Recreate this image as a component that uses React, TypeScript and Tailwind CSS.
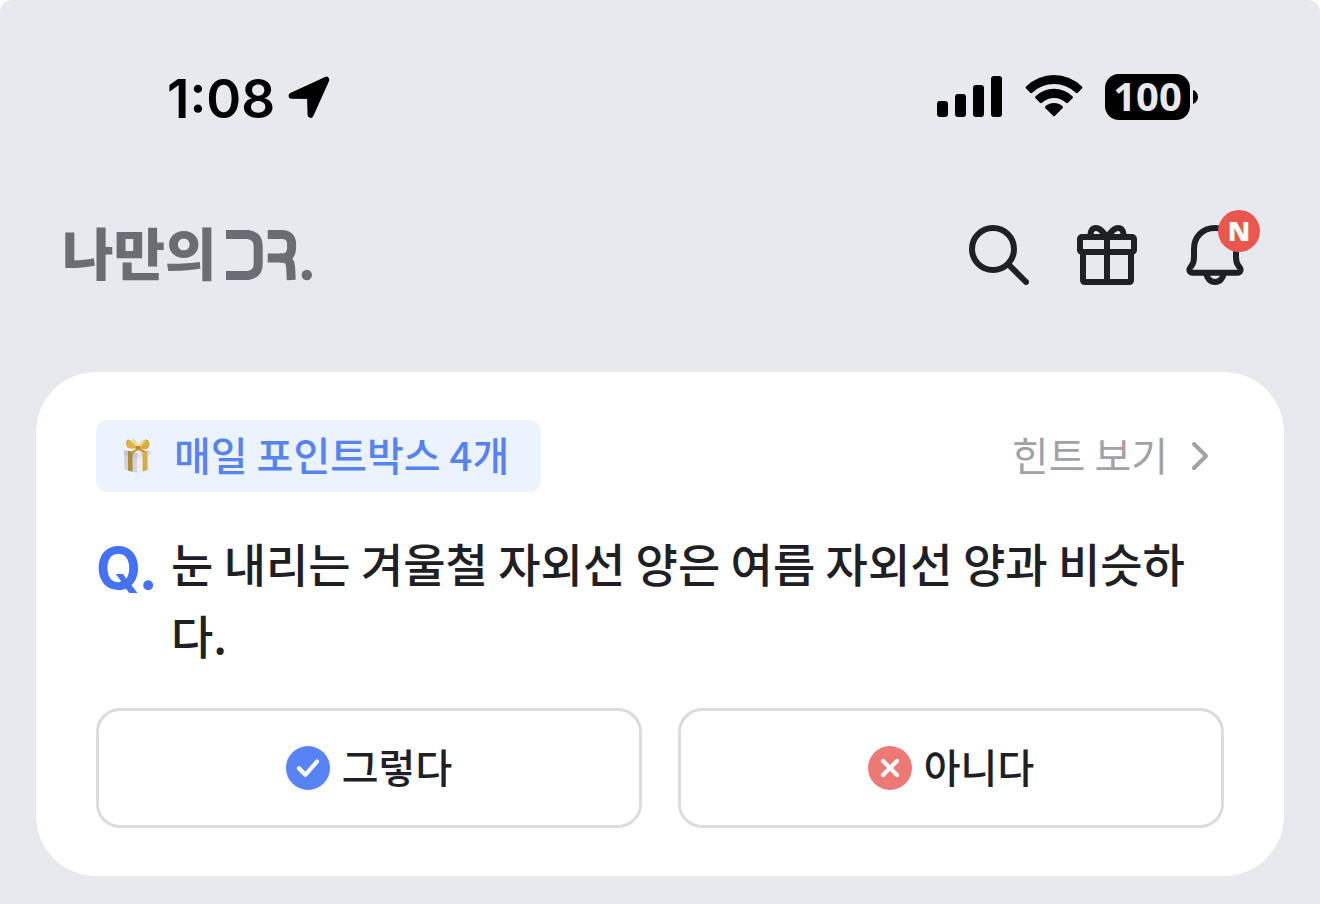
import React from "react";

function LocationIcon() {
  return (
    <svg viewBox="0 0 44 44" className="size-11" aria-hidden="true">
      <path
        d="M4.6 20.8 L39.3 4.7 L23.6 39.8 L23 21 Z"
        fill="#000"
        stroke="#000"
        strokeWidth="6"
        strokeLinejoin="round"
      />
    </svg>
  );
}

function SignalIcon() {
  return (
    <svg viewBox="0 0 66 44" className="h-11 w-[66px]" aria-hidden="true">
      <rect x="0" y="26" width="11" height="16" rx="3" />
      <rect x="18" y="19" width="11" height="23" rx="3" />
      <rect x="36" y="10" width="11" height="32" rx="3" />
      <rect x="54" y="1" width="11" height="41" rx="3" />
    </svg>
  );
}

function WifiIcon() {
  return (
    <svg viewBox="0 0 58 44" className="h-11 w-[58px]" aria-hidden="true">
      <path d="M1.1 13.6 Q0 12.5 1.1 11.4 A40 40 0 0 1 56.9 11.4 Q58 12.5 56.9 13.6 L52.8 17.8 Q51.8 18.7 50.8 17.8 A31.5 31.5 0 0 0 7.2 17.8 Q6.2 18.7 5.2 17.8 Z" />
      <path d="M10.5 23.2 Q9.5 22.2 10.5 21.2 A26.8 26.8 0 0 1 47.5 21.2 Q48.5 22.2 47.5 23.2 L43 27.7 Q42 28.6 41 27.7 A17.6 17.6 0 0 0 17 27.7 Q16 28.6 15 27.7 Z" />
      <path d="M20.5 33.2 Q19.5 32.1 20.6 31.1 A12.6 12.6 0 0 1 37.4 31.1 Q38.5 32.1 37.5 33.2 L30 40.8 Q29 41.8 28 40.8 Z" />
    </svg>
  );
}

function Battery() {
  return (
    <div className="flex items-center gap-[3px]" aria-label="배터리 100%">
      <div className="flex h-[46px] w-[85px] items-center justify-center rounded-[14px] bg-black pb-0.5">
        <span className="font-['Noto_Sans'] text-[40px] leading-none font-bold text-[#e8e9ee]">100</span>
      </div>
      <svg viewBox="0 0 5 14" className="h-3.5 w-[5px]" aria-hidden="true">
        <path d="M0 0 C3 1 5 4 5 7 C5 10 3 13 0 14 Z" />
      </svg>
    </div>
  );
}

function Logo() {
  return (
    <a href="#" className="flex items-center text-[#6b6d74]" aria-label="나만의DR.">
      <span className="pb-2 text-[56px] leading-[52px] font-black">나만의</span>
      <svg viewBox="225 225 90 60" className="ml-2 h-[60px] w-[90px]" fill="none" aria-hidden="true">
        <g stroke="currentColor" strokeWidth="9">
          <path d="M226 234.5 H248 Q258.2 236 258.2 246 V264 Q258.2 274 248 275.5 H226" />
          <path d="M267.7 234.5 H282 C288.5 234.5 291.6 238.5 291.6 244 V248 C291.6 254 288.5 258 282 258 H267.7" />
          <path d="M280 258 C288 258 290.3 261 290.6 267 L291.2 280" />
        </g>
        <circle cx="306.8" cy="275" r="5.2" fill="currentColor" />
      </svg>
    </a>
  );
}

function SearchIcon() {
  return (
    <svg viewBox="0 0 60 60" className="size-[60px]" fill="none" stroke="#1f2024" strokeWidth="6" strokeLinecap="round" aria-hidden="true">
      <circle cx="24" cy="24" r="21" />
      <path d="M39.5 39.5 L57 57" />
    </svg>
  );
}

function GiftIcon() {
  return (
    <svg viewBox="0 0 60 60" className="size-[60px]" fill="none" stroke="#1f2024" strokeWidth="6" strokeLinejoin="round" aria-hidden="true">
      <rect x="3" y="12" width="54" height="15" rx="2" />
      <path d="M6 27 V55 Q6 57 8 57 H52 Q54 57 54 55 V27" />
      <path d="M30 12 V57" />
      <path d="M14 12 C12.5 7 15 3 19 3 C23 3 25 6.5 30 11.5 C35 6.5 37 3 41 3 C45 3 47.5 7 46 12" />
    </svg>
  );
}

function BellIcon() {
  return (
    <svg viewBox="0 0 60 60" className="size-[60px]" fill="none" stroke="#1f2024" strokeWidth="6" strokeLinejoin="round" aria-hidden="true">
      <path d="M30 3 C17 3 9 12.5 9 24 V32 C9 36 8.4 38.3 6.8 40.4 L5.2 42.6 C3.6 45 4.6 47.7 7.6 47.7 H52.4 C55.4 47.7 56.4 45 54.8 42.6 L53.2 40.4 C51.6 38.3 51 36 51 32 V24 C51 12.5 43 3 30 3 Z" />
      <path d="M21 48 C22 53.6 25.5 57 30 57 C34.5 57 38 53.6 39 48" />
    </svg>
  );
}

function PresentBox() {
  return (
    <svg viewBox="0 0 32 36" className="h-9 w-8" aria-hidden="true">
      <path d="M4 12 L17 15 V35 L4.5 31.5 Z" fill="#d2d1e0" />
      <path d="M17 15 L30.5 12 L30 31.5 L17 35 Z" fill="#efedf3" />
      <path d="M4 11.5 L18 9 L31 11.5 L17 15 Z" fill="#f6f5fa" />
      <path d="M4 12 L17 15 V20 L4 17 Z" fill="#c4c3d4" />
      <path d="M17 15 L31 12 V17 L17 20 Z" fill="#e2dfe9" />
      <path d="M8 12.8 L12.5 14 V33.8 L8 32.5 Z" fill="#b08a35" />
      <path d="M22.5 13.8 L27.5 12.6 V32.3 L22.5 33.6 Z" fill="#d4af48" />
      <path d="M17 10 C14 5 9 0 7 2 C5 4 6 8 8 10 C11 11 14 11 17 10 Z" fill="#dcb64d" />
      <path d="M18 10 C19 4 25 0 28 2 C30 4 30 9 27 11 C24 12 21 11 18 10 Z" fill="#d6ab3f" />
      <path d="M16.5 8.5 C13 4 11 1 13 1 C15 1 17 4 18 8 Z M19 8 C20 4 23 2 26 3 L20 9 Z" fill="#f0d98a" />
      <path d="M15.5 8 H20 L20.5 12 L16 12.5 Z" fill="#b78a2b" />
      <path d="M16 11 L10 14 L13 15.5 L18 12 L23 14.5 L26 13 L20 10.5 Z" fill="#c79b35" />
    </svg>
  );
}

function ChevronRight() {
  return (
    <svg viewBox="0 0 48 48" className="size-12" fill="none" stroke="#a1a1a7" strokeWidth="4" strokeLinecap="round" strokeLinejoin="round" aria-hidden="true">
      <path d="M18 12 L30 24 L18 36" />
    </svg>
  );
}

function CheckBadge() {
  return (
    <svg viewBox="0 0 44 44" className="size-11" aria-hidden="true">
      <circle cx="22" cy="22" r="22" fill="#5783f6" />
      <path d="M13 22.2 L19.3 28.8 L31 15.6" fill="none" stroke="#fff" strokeWidth="4.2" strokeLinecap="round" strokeLinejoin="round" />
    </svg>
  );
}

function CrossBadge() {
  return (
    <svg viewBox="0 0 44 44" className="size-11" aria-hidden="true">
      <circle cx="22" cy="22" r="22" fill="#ec7975" />
      <path d="M15 15 L29 29 M29 15 L15 29" fill="none" stroke="#fff" strokeWidth="4.2" strokeLinecap="round" />
    </svg>
  );
}

function AnswerButton({ icon, label }: { icon: React.ReactNode; label: string }) {
  return (
    <button
      type="button"
      className="flex h-[120px] items-center justify-center gap-3 rounded-3xl border-3 border-[#dcdcde] bg-white text-[40px] leading-[60px] font-medium"
    >
      {icon}
      <span className="pb-1">{label}</span>
    </button>
  );
}

export default function App() {
  return (
    <div className="min-h-screen rounded-t-xl bg-[#e8e9ee] pb-7 font-['Noto_Sans_CJK_KR',sans-serif] text-[#1f2024]">
      <div className="flex items-center justify-between pt-[72px] pr-[122px] pl-[167px] text-black">
        <div className="flex h-[50px] items-center gap-3">
          <span className="pt-1 font-['Inter'] text-[53px] leading-none font-semibold">1:08</span>
          <LocationIcon />
        </div>
        <div className="flex h-[50px] items-center gap-[22px]">
          <SignalIcon />
          <WifiIcon />
          <Battery />
        </div>
      </div>

      <header className="mt-[103px] flex items-center justify-between pr-[75px] pl-[62px]">
        <Logo />
        <nav className="flex items-center gap-12">
          <button type="button" aria-label="검색">
            <SearchIcon />
          </button>
          <button type="button" aria-label="선물">
            <GiftIcon />
          </button>
          <button type="button" aria-label="알림" className="relative">
            <BellIcon />
            <span className="absolute -top-[15px] -right-[15px] flex size-[42px] items-center justify-center rounded-full bg-[#eb5650] pb-0.5 font-['Open_Sans'] text-[27px] leading-none font-extrabold text-white">
              N
            </span>
          </button>
        </nav>
      </header>

      <main className="mx-9 mt-[87px] rounded-[60px] bg-white px-[60px] py-12">
        <div className="flex items-center justify-between">
          <div className="flex h-[72px] items-center gap-[22px] rounded-xl bg-[#ebf3fe] pr-8 pl-6 text-[40px] leading-[60px] font-medium text-[#5783f0]">
            <PresentBox />
            <span className="pb-1">매일 포인트박스 4개</span>
          </div>
          <button type="button" className="flex items-center gap-2 text-[40px] leading-[60px] text-[#a1a1a7]">
            <span className="pb-1">힌트 보기</span>
            <ChevronRight />
          </button>
        </div>

        <div className="mt-[34px] flex">
          <span className="w-[75px] shrink-0 pt-1.5 font-['Inter'] text-[58px] leading-[72px] font-bold text-[#4571f5]">Q.</span>
          <p className="text-[46px] leading-[72px] font-medium break-all">
            눈 내리는 겨울철 자외선 양은 여름 자외선 양과 비슷하다.
          </p>
        </div>

        <div className="mt-[38px] grid grid-cols-2 gap-9">
          <AnswerButton icon={<CheckBadge />} label="그렇다" />
          <AnswerButton icon={<CrossBadge />} label="아니다" />
        </div>
      </main>
    </div>
  );
}
